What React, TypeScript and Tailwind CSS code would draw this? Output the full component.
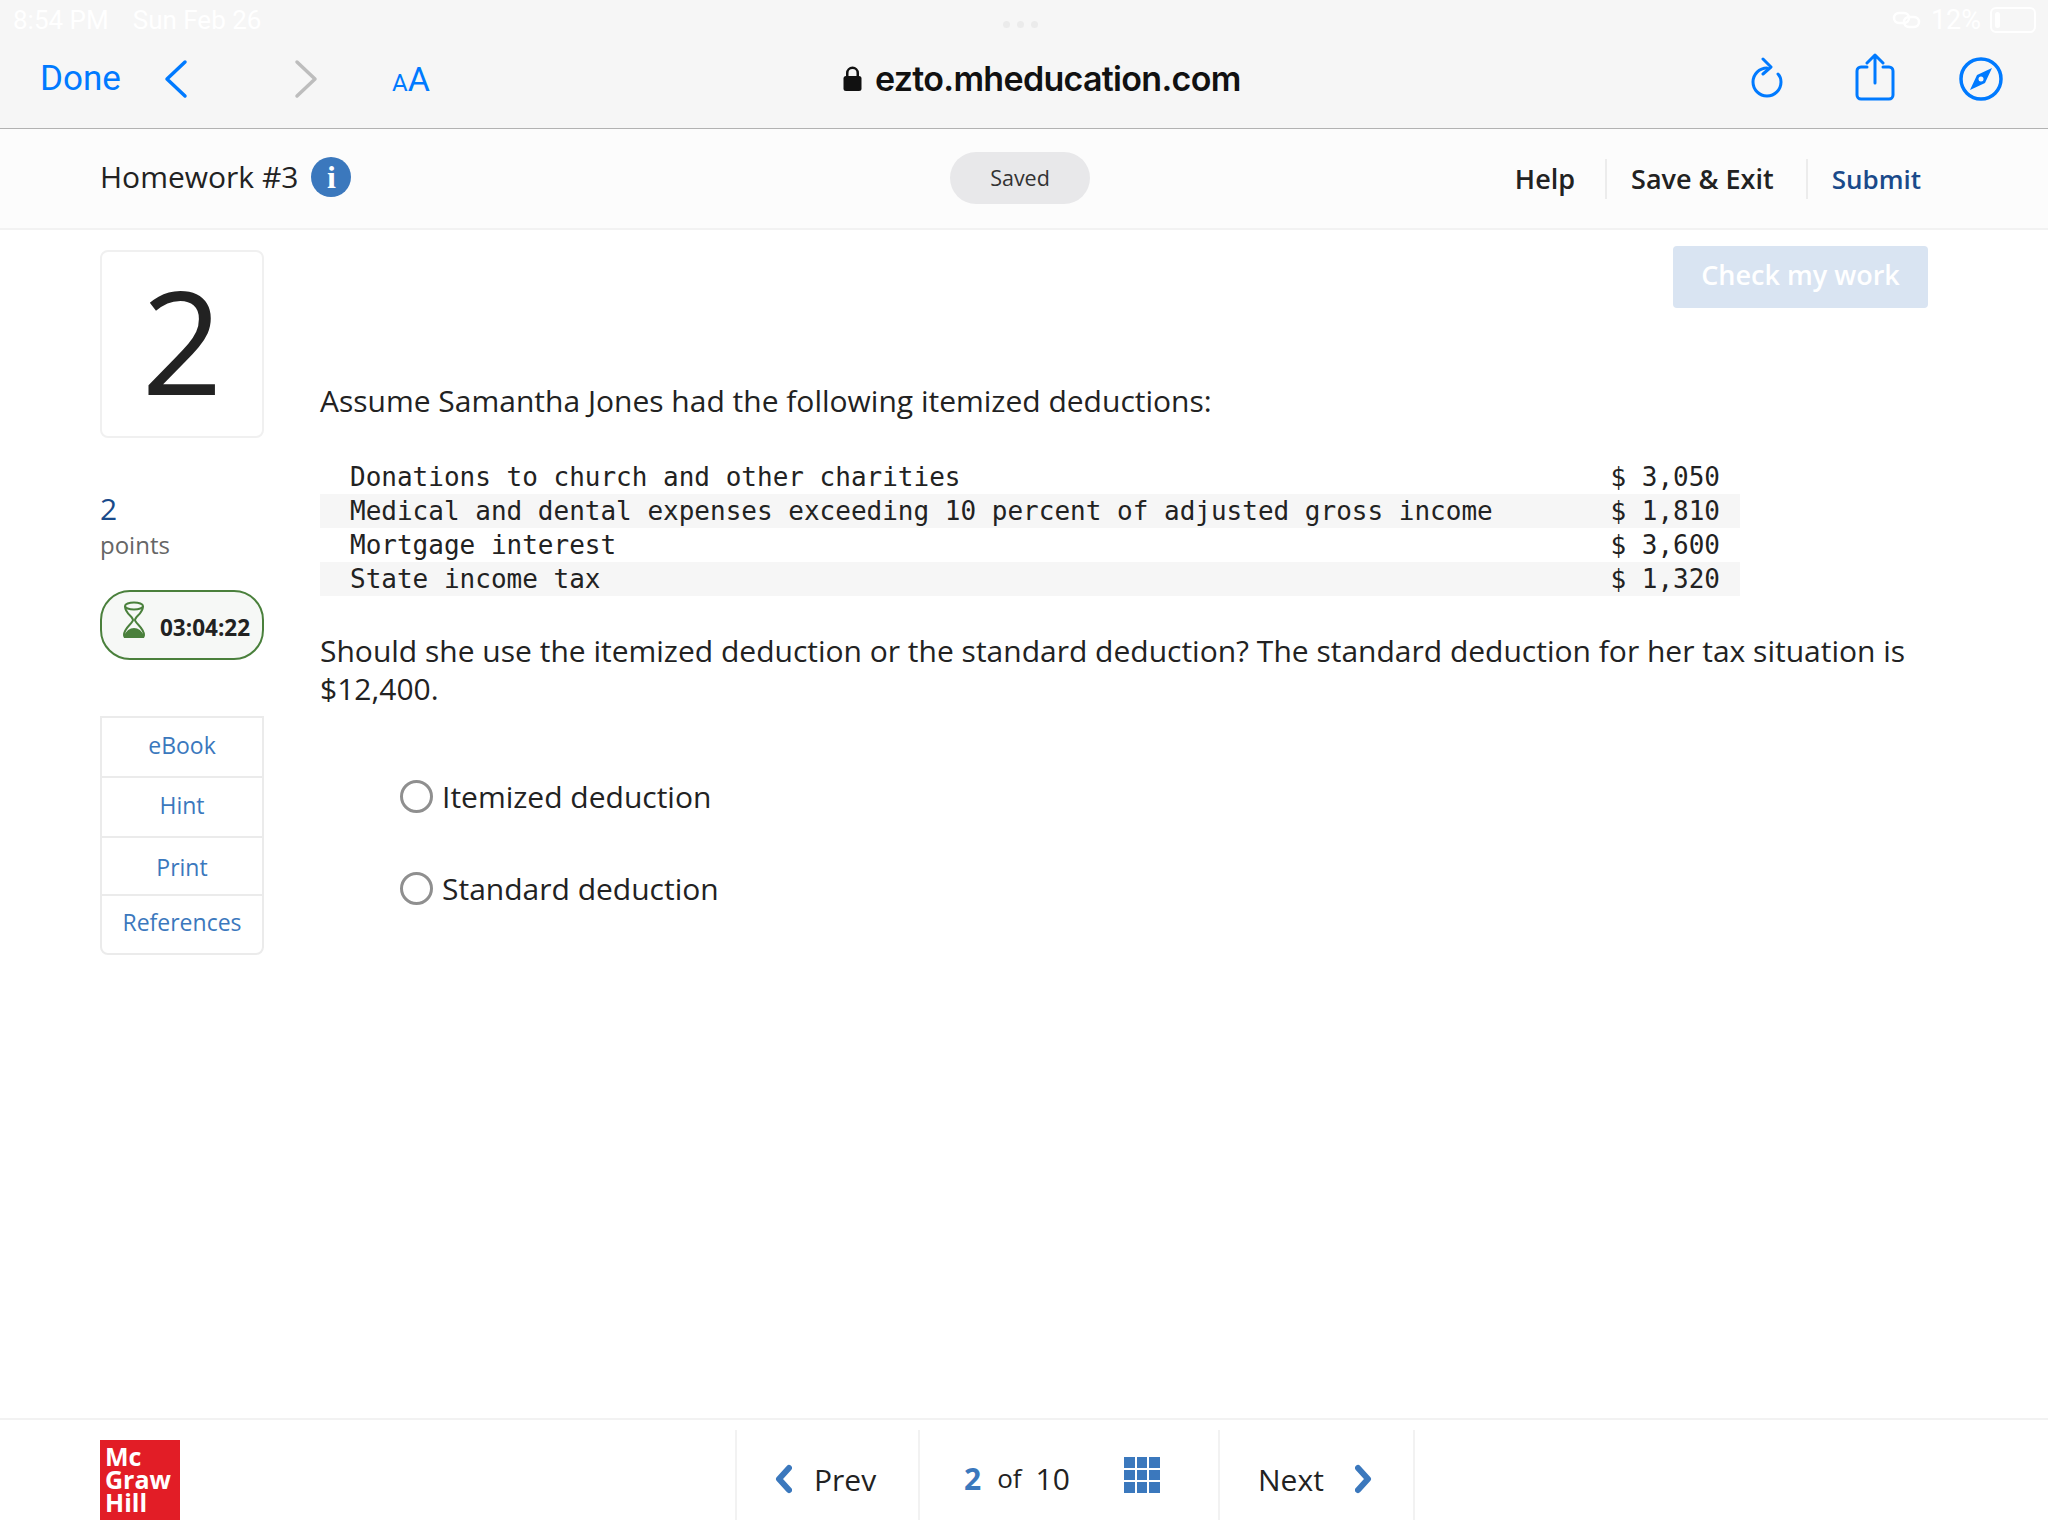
const rows = [
  { label: "Donations to church and other charities", amount: "$ 3,050", shaded: false },
  { label: "Medical and dental expenses exceeding 10 percent of adjusted gross income", amount: "$ 1,810", shaded: true },
  { label: "Mortgage interest", amount: "$ 3,600", shaded: false },
  { label: "State income tax", amount: "$ 1,320", shaded: true },
];

const tools = [
  { label: "eBook", cell: "h-[60px] pb-[4px]" },
  { label: "Hint", cell: "h-[60px] pb-[4px]" },
  { label: "Print", cell: "h-[58px] pt-[2px]" },
  { label: "References", cell: "h-[57px] pb-[4px]" },
];

function BrowserBar() {
  return (
    <div className="relative h-[129px] shrink-0 border-b border-[#b2b2b2] bg-[#f6f6f6] font-['Inter',sans-serif]">
      {/* iOS status bar, white on light gray */}
      <div className="flex h-[40px] items-center justify-between pl-[13px] pr-[12px] font-['Roboto',sans-serif] text-[26px] text-white">
        <div className="flex gap-[24px]">
          <span>8:54 PM</span>
          <span>Sun Feb 26</span>
        </div>
        <div className="flex items-center gap-[9px]">
          <svg width="30" height="20" viewBox="0 0 30 20" fill="none" stroke="#fff" strokeWidth="2.5">
            <rect x="2" y="3" width="15" height="10" rx="5" />
            <rect x="12" y="7" width="15" height="10" rx="5" />
          </svg>
          <span className="text-[27px]">12%</span>
          <div className="h-[26px] w-[46px] rounded-[6px] border-2 border-white p-[3px]">
            <div className="h-full w-[5px] rounded-sm bg-white" />
          </div>
        </div>
      </div>
      <div className="absolute left-[1003px] top-[21px] flex gap-[7px]">
        <div className="h-[7px] w-[7px] rounded-full bg-[#ebebeb]" />
        <div className="h-[7px] w-[7px] rounded-full bg-[#ebebeb]" />
        <div className="h-[7px] w-[7px] rounded-full bg-[#ebebeb]" />
      </div>

      <div className="relative -mt-[3px] flex h-[84px] items-center pl-[40px] pr-[43px]">
        <span className="w-[124px] font-['Roboto',sans-serif] text-[35px] text-[#007aff]">Done</span>
        <svg className="mr-[106px]" width="24" height="40" viewBox="0 0 24 40" fill="none" stroke="#007aff" strokeWidth="3.5" strokeLinecap="round" strokeLinejoin="round">
          <path d="M21 3 3 20l18 17" />
        </svg>
        <svg className="mr-[74px]" width="24" height="40" viewBox="0 0 24 40" fill="none" stroke="#bdbdbd" strokeWidth="3.5" strokeLinecap="round" strokeLinejoin="round">
          <path d="M3 3l18 17L3 37" />
        </svg>
        <span className="font-['Roboto',sans-serif] text-[#007aff]">
          <span className="text-[24px]">A</span>
          <span className="text-[34px]">A</span>
        </span>

        <div className="absolute left-[843px] top-[16px] flex items-center gap-[13px]">
          <svg width="19" height="25" viewBox="0 0 19 25" fill="#111">
            <path d="M3 11V7a6.500 6.500 0 0 1 13 0v4h-2.500V7a4 4 0 0 0-8 0v4z" />
            <rect x="0.500" y="10" width="18" height="15" rx="2.500" />
          </svg>
          <span className="text-[34px] font-semibold tracking-[-0.7px] text-[#111]">ezto.mheducation.com</span>
        </div>

        <div className="ml-auto flex items-center">
          <svg className="-mt-[2px] mr-[70px]" width="36" height="42" viewBox="0 0 36 42" fill="none" stroke="#007aff" strokeWidth="3" strokeLinecap="round" strokeLinejoin="round">
            <path d="M18 11A14 14 0 1 0 32 25c0-3.500-1-6-3-8" />
            <path d="M14 2l8 8-8 7" />
          </svg>
          <svg className="-mt-[4px] mr-[64px]" width="40" height="48" viewBox="0 0 40 48" fill="none" stroke="#007aff" strokeWidth="3" strokeLinecap="round" strokeLinejoin="round">
            <path d="M12 14H6a4 4 0 0 0-4 4v24a4 4 0 0 0 4 4h28a4 4 0 0 0 4-4V18a4 4 0 0 0-4-4h-6" />
            <path d="M20 30V2M12 10l8-8 8 8" />
          </svg>
          <svg className="mr-[2px]" width="44" height="44" viewBox="0 0 44 44" fill="none">
            <circle cx="22" cy="22" r="20" stroke="#007aff" strokeWidth="3.500" />
            <path d="M33 11 18 18l-7 15 15-7z" fill="#007aff" />
            <circle cx="22" cy="22" r="2.500" fill="#f6f6f6" />
          </svg>
        </div>
      </div>
    </div>
  );
}

function AppHeader() {
  return (
    <div className="relative flex h-[101px] shrink-0 items-center border-b-2 border-[#f2f2f2] bg-[#fcfcfc] pb-[4px] pl-[100px] pr-[127px]">
      <span className="text-[30px] text-[#222]">Homework #3</span>
      <span className="ml-[13px] flex h-[40px] w-[40px] items-center justify-center rounded-full bg-[#3b78bd] font-['Liberation_Serif',serif] text-[32px] font-bold text-white">
        i
      </span>
      <div className="absolute left-[950px] top-[23px] flex h-[52px] w-[140px] items-center justify-center rounded-full bg-[#e8e8ea] text-[21.5px] text-[#333]">
        Saved
      </div>
      <div className="ml-auto mt-[4px] flex items-center text-[27px] font-semibold text-[#222]">
        <span className="border-r-2 border-[#ececec] pr-[30px] leading-[40px]">Help</span>
        <span className="border-r-2 border-[#ececec] pl-[24px] pr-[32px] leading-[40px]">Save &amp; Exit</span>
        <span className="pl-[24px] text-[26px] leading-[40px] text-[#1a4a8a]">Submit</span>
      </div>
    </div>
  );
}

function Sidebar() {
  return (
    <div className="flex w-[164px] shrink-0 flex-col pt-[20px]">
      <div className="flex h-[188px] items-center justify-center rounded-[8px] border-2 border-[#f0f0f0] pb-[8px] text-[142px] leading-none text-[#222]">
        2
      </div>
      <div className="mt-[52px] text-[30px] leading-[38px] text-[#1a4a8a]">2</div>
      <div className="text-[24px] leading-[34px] text-[#666]">points</div>
      <div className="mt-[28px] flex h-[70px] items-center gap-[14px] rounded-[30px] border-2 border-[#4a803c] bg-[#f6f8f6] pl-[20px]">
        <svg className="-mt-[10px]" width="24" height="38" viewBox="0 0 24 38" fill="none" stroke="#4a803c" strokeWidth="2">
          <ellipse cx="12" cy="5" rx="9" ry="3.500" />
          <path d="M3 5c0 8 8 10 8 14 0 3-9 8-9 15 0 1 1 2 2 2h16c1 0 2-1 2-2 0-7-9-12-9-15 0-4 8-6 8-14" />
          <path d="M3 36c1-6 6-8 9-8s8 2 9 8z" fill="#4a803c" />
        </svg>
        <span className="mt-[5px] text-[22.5px] font-bold text-[#222]">03:04:22</span>
      </div>
      <div className="mt-[56px] overflow-hidden rounded-b-[8px] border-2 border-[#ebebeb] text-[23px] text-[#3b78bd]">
        {tools.map((tool, i) => (
          <div
            key={tool.label}
            className={`flex items-center justify-center ${tool.cell} ${i < tools.length - 1 ? "border-b-2 border-[#ebebeb]" : ""}`}
          >
            {tool.label}
          </div>
        ))}
      </div>
    </div>
  );
}

function Question() {
  return (
    <div className="min-w-0 flex-1 pl-[56px] pr-[120px] text-[30px] text-[#222]">
      <div className="flex justify-end pt-[16px]">
        <div className="flex h-[62px] w-[255px] items-center justify-center rounded-[4px] bg-[#d9e4f2] pb-[4px] text-[27px] font-semibold text-white">
          Check my work
        </div>
      </div>
      <p className="mt-[73px] leading-[40px]">Assume Samantha Jones had the following itemized deductions:</p>
      <div className="mt-[39px] w-[1420px] font-['DejaVu_Sans_Mono',monospace] text-[26px] leading-[34px] text-[#222]">
        {rows.map((row) => (
          <div
            key={row.label}
            className={`flex h-[34px] justify-between whitespace-pre pl-[30px] pr-[20px] ${row.shaded ? "bg-[#f6f6f6]" : ""}`}
          >
            <span>{row.label}</span>
            <span>{row.amount}</span>
          </div>
        ))}
      </div>
      <p className="mt-[36px] leading-[38px]">
        Should she use the itemized deduction or the standard deduction? The standard deduction for her tax situation is
        $12,400.
      </p>
      <div className="mt-[68px] flex flex-col gap-[52px] pl-[80px] text-[30px]">
        <label className="flex h-[40px] items-center gap-[9px]">
          <span className="h-[33px] w-[33px] rounded-full border-[3px] border-[#8f8f8f]" />
          Itemized deduction
        </label>
        <label className="flex h-[40px] items-center gap-[9px]">
          <span className="h-[33px] w-[33px] rounded-full border-[3px] border-[#8f8f8f]" />
          Standard deduction
        </label>
      </div>
    </div>
  );
}

function Footer() {
  return (
    <div className="relative flex h-[118px] shrink-0 border-t-2 border-[#f2f2f2] bg-white pl-[100px] pt-[20px]">
      <svg width="80" height="80" viewBox="0 0 80 80">
        <rect width="80" height="80" fill="#e21d26" />
        <g fill="#fff" fontSize="25" fontWeight="700">
          <text x="5" y="26">Mc</text>
          <text x="5" y="49">Graw</text>
          <text x="5" y="72">Hill</text>
        </g>
      </svg>
      <div className="absolute left-[735px] top-[10px] flex h-[90px] items-center border-x-2 border-[#f2f2f2] text-[30px] text-[#222]">
        <div className="flex h-full w-[181px] items-center gap-[22px] pl-[37px] pt-[8px]">
          <svg width="18" height="30" viewBox="0 0 18 30" fill="none" stroke="#3b78bd" strokeWidth="6" strokeLinecap="round" strokeLinejoin="round">
            <path d="M15 4 5 15l10 11" />
          </svg>
          <span>Prev</span>
        </div>
        <div className="flex h-full w-[302px] items-center border-x-2 border-[#f2f2f2] pl-[44px] pt-[6px]">
          <span className="font-bold text-[#3b78bd]">2</span>
          <span className="ml-[16px] text-[26px]">of</span>
          <span className="ml-[14px]">10</span>
          <div className="-mt-[6px] ml-[54px] grid h-[36px] w-[36px] grid-cols-3 gap-[2px]">
            {Array.from({ length: 9 }).map((_, i) => (
              <div key={i} className="bg-[#3b78bd]" />
            ))}
          </div>
        </div>
        <div className="flex h-full w-[193px] items-center gap-[31px] pl-[38px] pt-[8px]">
          <span>Next</span>
          <svg width="18" height="30" viewBox="0 0 18 30" fill="none" stroke="#3b78bd" strokeWidth="6" strokeLinecap="round" strokeLinejoin="round">
            <path d="M3 4l10 11L3 26" />
          </svg>
        </div>
      </div>
    </div>
  );
}

export default function App() {
  return (
    <div className="flex h-[1536px] w-[2048px] flex-col overflow-hidden bg-white font-['Open_Sans',sans-serif]">
      <BrowserBar />
      <AppHeader />
      <div className="flex flex-1 pl-[100px]">
        <Sidebar />
        <Question />
      </div>
      <Footer />
    </div>
  );
}
